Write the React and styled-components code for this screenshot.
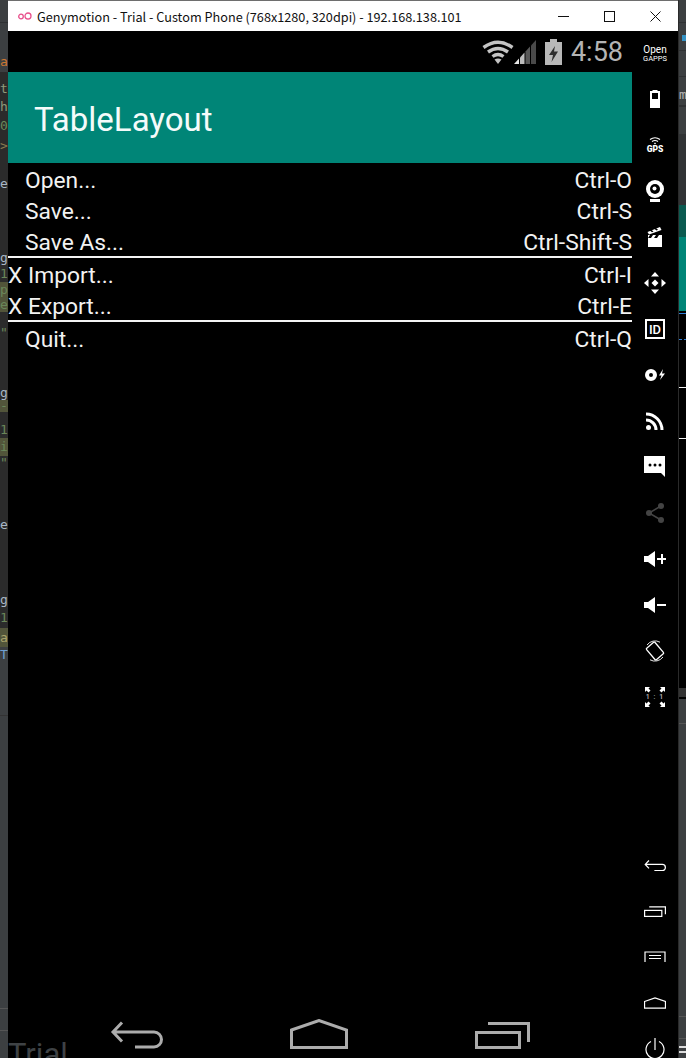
import React from 'react';
import styled, { createGlobalStyle } from 'styled-components';

const Global = createGlobalStyle`
  html, body { margin: 0; padding: 0; background: #000; }
  body { font-family: Roboto, "Liberation Sans", sans-serif; overflow: hidden; }
`;

const Desktop = styled.div`
  display: flex;
  width: 686px;
  height: 1058px;
  overflow: hidden;
  background: #3c3f41;
`;

const Gutter = styled.div`
  flex: none;
  width: 8px;
  display: flex;
  flex-direction: column;
  overflow: hidden;
  border-left: ${(p) => (p.$right ? '1px solid #2a2a2a' : 'none')};
  box-sizing: border-box;
`;

const Band = styled.div`
  flex: none;
  height: ${(p) => p.$h}px;
  line-height: ${(p) => p.$h}px;
  background: ${(p) => p.$bg || '#3c3f41'};
  color: ${(p) => p.$fg || '#a9b7c6'};
  font-family: "DejaVu Sans Mono", monospace;
  font-size: 13px;
  white-space: nowrap;
  overflow: hidden;
`;

const Window = styled.div`
  flex: none;
  width: 670px;
  display: flex;
  flex-direction: column;
  background: #000;
`;

const TitleBar = styled.div`
  flex: none;
  height: 30px;
  border-top: 1px solid #6e6e6e;
  background: #fff;
  display: flex;
  align-items: center;
  color: #111;
  font-family: "Noto Sans CJK SC", "Open Sans", sans-serif;
  font-size: 12.7px;
`;

const TitleLogo = styled.svg`
  flex: none;
  width: 14px;
  height: 10px;
  margin-left: 10px;
  margin-right: 5px;
`;

const TitleText = styled.span`
  flex: 1;
  white-space: nowrap;
`;

const WinButton = styled.div`
  flex: none;
  width: 46px;
  height: 30px;
  display: flex;
  align-items: center;
  justify-content: center;
  svg { width: 11px; height: 11px; }
`;

const Body = styled.div`
  flex: 1;
  display: flex;
  min-height: 0;
`;

const Phone = styled.div`
  position: relative;
  flex: none;
  width: 624px;
  display: flex;
  flex-direction: column;
  color: #fff;
`;

const StatusBar = styled.div`
  flex: none;
  height: 41px;
  display: flex;
  align-items: center;
  justify-content: flex-end;
  padding-right: 9px;
`;

const StatusTime = styled.span`
  margin-left: 9px;
  font-size: 27px;
  color: #b4b4b4;
`;

const StatusIcon = styled.svg`
  flex: none;
  display: block;
  margin-left: ${(p) => p.$gap || 0}px;
`;

const AppBar = styled.div`
  flex: none;
  height: 88px;
  padding-top: 3px;
  background: #008577;
  display: flex;
  align-items: center;
  padding-left: 26px;
  font-size: 33px;
  color: #f4fbfa;
`;

const Table = styled.div`
  flex: 1;
`;

const Row = styled.div`
  display: flex;
  justify-content: space-between;
  height: 31px;
  line-height: 35px;
  font-size: 22.8px;
  color: #f2f2f2;
`;

const RowLabel = styled.span`
  padding-left: ${(p) => (p.$marked ? 0 : 17)}px;
  white-space: pre;
`;

const Divider = styled.div`
  height: 2px;
  background: #f4f4f4;
`;

const Nav = styled.div`
  flex: none;
  display: flex;
  justify-content: center;
  gap: 127px;
  padding-bottom: 9px;
  color: #acacac;
`;

const Watermark = styled.span`
  position: absolute;
  left: 0;
  top: 1005px;
  font-size: 31px;
  color: #3e4245;
`;

const Rail = styled.div`
  flex: none;
  width: 46px;
  display: flex;
  flex-direction: column;
  overflow: hidden;
`;

const RailItem = styled.div`
  flex: none;
  height: 46px;
  display: flex;
  flex-direction: column;
  align-items: center;
  justify-content: center;
  color: ${(p) => (p.$off ? '#444' : '#fff')};
  &:first-child { height: 45px; }
`;

const RailGap = styled.div`
  flex: none;
  height: 122px;
`;

const GappsOpen = styled.span`
  font-size: 10px;
  line-height: 10px;
`;

const GappsSub = styled.span`
  font-size: 7.5px;
  line-height: 8px;
`;

const GpsLabel = styled.span`
  font-size: 8.5px;
  line-height: 9px;
  font-weight: 900;
`;

const IdBox = styled.div`
  width: 20px;
  height: 20px;
  box-sizing: border-box;
  border: 2px solid #fff;
  display: flex;
  align-items: center;
  justify-content: center;
  font-size: 13px;
  font-weight: 500;
`;

const RatioBox = styled.div`
  position: relative;
  width: 22px;
  height: 22px;
  display: flex;
  align-items: center;
  justify-content: center;
  font-size: 7px;
  font-weight: 500;
  letter-spacing: 1px;
  color: #bbb;
  svg { position: absolute; inset: 0; }
`;

const L = (h, bg, t, fg) => ({ h, bg, t, fg });
const DARK = '#2b2b2b';
const OLIVE = '#52553a';
const GREEN = '#6a8759';

const leftBands = [
  L(22), L(1, '#2f3133'), L(29), L(20, '#3c3f41', 'av', '#cc7832'),
  L(8, DARK), L(17, DARK, 't', '#8f9a7a'), L(19, DARK, 'h', '#8f9a7a'), L(20, DARK, '0', GREEN),
  L(19, DARK, '>', '#8a7a4e'), L(21, DARK), L(16, DARK, 'e'), L(58, DARK),
  L(16, DARK, 'g'), L(16, DARK, '1', GREEN), L(16, OLIVE, 'p', GREEN), L(14, OLIVE, 'e', GREEN),
  L(13, DARK), L(15, DARK, '"', GREEN), L(45, DARK), L(15, DARK, 'g'),
  L(12, OLIVE, '-', GREEN), L(10, DARK), L(16, DARK, '1', GREEN), L(18, OLIVE, 'i', GREEN),
  L(14, DARK, '"', GREEN), L(47, DARK), L(16, DARK, 'e'), L(59, DARK),
  L(16, DARK, 'g'), L(20, DARK, '1', GREEN), L(19, OLIVE, 'a', '#a9a36a'), L(15, '#3c3f41', 'T', '#6f9fd0'),
  L(53), L(1, '#333'), L(292), L(1, '#555'), L(21), L(1, '#555'), L(21),
];

const rightBands = [
  L(22), L(1, '#2f3133'), L(12), L(6, 'linear-gradient(90deg,#3c3f41 50%,#3592c4 50%)'), L(9),
  L(1, '#2f3133'), L(25), L(1, '#2f3133'), L(8), L(20, '#3c3f41', 'm', '#b5b5b5'), L(2, '#2f3133'),
  L(27), L(71, '#313335'), L(32, '#0b5a50'), L(74, '#008577'), L(2, '#000'), L(1, '#2f7fd6'),
  L(25, '#000'), L(1, 'repeating-linear-gradient(90deg,#2f7fd6 0 3px,#000 3px 5px)'), L(47, '#000'),
  L(1, '#f4f4f4'), L(50, '#000'), L(1, '#f4f4f4'), L(249, '#000'), L(9, '#333'), L(2, '#000'),
  L(24), L(1, '#555'), L(292), L(1, '#555'), L(21), L(1, '#555'), L(7), L(2, '#ddd'), L(3), L(2, '#ddd'), L(7),
];

const rows = [
  { label: 'Open...', key: 'Ctrl-O' },
  { label: 'Save...', key: 'Ctrl-S' },
  { label: 'Save As...', key: 'Ctrl-Shift-S' },
  { divider: true },
  { marked: true, label: 'X Import...', key: 'Ctrl-I' },
  { marked: true, label: 'X Export...', key: 'Ctrl-E' },
  { divider: true },
  { label: 'Quit...', key: 'Ctrl-Q' },
];

const BackIcon = ({ w = 53, h = 30, sw = 3 }) => (
  <svg width={w} height={h} viewBox="0 0 53 30" fill="none" stroke="currentColor" strokeWidth={sw}>
    <path d="M12 3.5 L3 13 L12 22.5 M3 13 H44 A7.5 7.5 0 0 1 44 28 H25" />
  </svg>
);

const HomeIcon = ({ w = 58, h = 30, sw = 3 }) => (
  <svg width={w} height={h} viewBox="0 0 58 30" fill="none" stroke="currentColor" strokeWidth={sw}>
    <path d="M1.5 11 L29 1.5 L56.5 11 V28.5 H1.5 Z" />
  </svg>
);

const RecentsIcon = ({ w = 55, h = 30, sw = 3 }) => (
  <svg width={w} height={h} viewBox="0 0 55 30" fill="none" stroke="currentColor" strokeWidth={sw}>
    <rect x="1.5" y="13.5" width="43" height="15" />
    <path d="M13 4.5 H53.5 V23" />
  </svg>
);

const Wifi = () => (
  <StatusIcon width="32" height="24" viewBox="0 0 32 24" fill="none" stroke="#c4c4c4" strokeWidth="3.4">
    <path d="M1.5 7.5 Q16 -3 30.5 7.5" />
    <path d="M6 12 Q16 5 26 12" />
    <path d="M10.5 16.5 Q16 12.5 21.5 16.5" />
    <path d="M12.5 19.5 Q16 17.5 19.5 19.5 L16 24 Z" fill="#c4c4c4" stroke="none" />
  </StatusIcon>
);

const Signal = () => (
  <StatusIcon width="22" height="24" viewBox="0 0 22 24">
    <polygon points="0,24 5,18.5 5,24" fill="#e6e6e6" />
    <polygon points="6,24 6,17.5 10.5,12.5 10.5,24" fill="#bdbdbd" />
    <polygon points="11.5,24 11.5,11.5 16,6.5 16,24" fill="#585858" />
    <polygon points="17,24 17,5.5 22,0 22,24" fill="#4a4a4a" />
  </StatusIcon>
);

const Battery = () => (
  <StatusIcon $gap={9} width="17" height="26" viewBox="0 0 17 26">
    <path d="M5 0 H12 V3 H17 V26 H0 V3 H5 Z" fill="#b8b8b8" />
    <path d="M10 7 L4 16 H8 L6.5 23 L13 12.5 H9 Z" fill="#2e2e2e" />
  </StatusIcon>
);

const Webcam = () => (
  <svg width="20" height="24" viewBox="0 0 20 24">
    <path d="M5 20 H15 V23 H5 Z" fill="currentColor" />
    <circle cx="10" cy="10" r="9" fill="currentColor" />
    <circle cx="10" cy="10" r="5" fill="#000" />
    <circle cx="9.5" cy="9.5" r="2" fill="currentColor" />
  </svg>
);

const Clapper = () => (
  <svg width="16" height="20" viewBox="0 0 16 20" fill="currentColor">
    <path d="M1 8 H15 V20 H1 Z" />
    <path d="M0.5 5 L13 0 L14.5 3 L2 7.5 Z" />
    <path d="M3 8 H6 L4 11 H1 Z M9 8 H12 L10 11 H7 Z" fill="#000" />
    <path d="M4 2.5 L6.5 4.5 L5 5.2 L2.5 3.2 Z M8.5 0.8 L11 2.8 L9.5 3.4 L7 1.4 Z" fill="#000" />
  </svg>
);

const Move = () => (
  <svg width="22" height="22" viewBox="0 0 22 22" fill="currentColor">
    <path d="M11 0 L15 4.5 H7 Z M11 22 L15 17.5 H7 Z M0 11 L4.5 7 V15 Z M22 11 L17.5 7 V15 Z" />
    <path d="M11 7.5 L14.5 11 L11 14.5 L7.5 11 Z" />
  </svg>
);

const Disc = () => (
  <svg width="22" height="14" viewBox="0 0 22 14" fill="currentColor">
    <path fillRule="evenodd" d="M7 1 A6 6 0 1 1 7 13 A6 6 0 1 1 7 1 Z M7 5 A2 2 0 1 0 7 9 A2 2 0 1 0 7 5 Z" />
    <path d="M19 1 L15 7.5 H17.5 L16 12 L21 5.5 H18 Z" />
  </svg>
);

const Rss = () => (
  <svg width="18" height="18" viewBox="0 0 18 18" fill="none" stroke="currentColor" strokeWidth="3">
    <circle cx="2.5" cy="15.5" r="2.5" fill="currentColor" stroke="none" />
    <path d="M0 8 A10 10 0 0 1 10 18" />
    <path d="M0 2 A16 16 0 0 1 16 18" />
  </svg>
);

const Message = () => (
  <svg width="22" height="24" viewBox="0 0 22 24">
    <path d="M0 1 H21 V22 L17 18 H0 Z" fill="currentColor" />
    <circle cx="6" cy="10" r="1.5" fill="#000" />
    <circle cx="11" cy="10" r="1.5" fill="#000" />
    <circle cx="16" cy="10" r="1.5" fill="#000" />
  </svg>
);

const Share = () => (
  <svg width="20" height="22" viewBox="0 0 20 22" fill="currentColor" stroke="currentColor">
    <path d="M16 4 L4 11 L16 18" fill="none" strokeWidth="1.5" />
    <circle cx="16" cy="4" r="3" stroke="none" />
    <circle cx="4" cy="11" r="3" stroke="none" />
    <circle cx="16" cy="18" r="3" stroke="none" />
  </svg>
);

const Volume = ({ plus }) => (
  <svg width="22" height="16" viewBox="0 0 22 16" fill="currentColor">
    <path d="M0 5 H4 L11 0 V16 L4 11 H0 Z" />
    <path d={plus ? 'M13 7 H17 V3 H19 V7 H22 V9 H19 V13 H17 V9 H13 Z' : 'M13 7 H22 V9 H13 Z'} />
  </svg>
);

const Rotate = () => (
  <svg width="22" height="22" viewBox="0 0 22 22" fill="none" stroke="currentColor">
    <rect x="5.5" y="3.5" width="11" height="15" rx="1" transform="rotate(-40 11 11)" strokeWidth="1.3" />
    <path d="M3 5 A10 10 0 0 1 16 2.2 M19 17 A10 10 0 0 1 6 19.8" strokeWidth="0.9" />
  </svg>
);

const RatioArrows = () => (
  <svg width="22" height="22" viewBox="0 0 22 22" fill="#fff">
    <path d="M1 1 H6 L4.5 2.5 L6.5 4.5 L4.5 6.5 L2.5 4.5 L1 6 Z" />
    <path d="M21 1 H16 L17.5 2.5 L15.5 4.5 L17.5 6.5 L19.5 4.5 L21 6 Z" />
    <path d="M1 21 H6 L4.5 19.5 L6.5 17.5 L4.5 15.5 L2.5 17.5 L1 16 Z" />
    <path d="M21 21 H16 L17.5 19.5 L15.5 17.5 L17.5 15.5 L19.5 17.5 L21 16 Z" />
  </svg>
);

const MenuIcon = () => (
  <svg width="22" height="12" viewBox="0 0 22 12" fill="none" stroke="currentColor" strokeWidth="1.2">
    <path d="M1 11 V1 H21 V11 M5 4.5 H17 M5 7.5 H17" />
  </svg>
);

const PowerIcon = () => (
  <svg width="20" height="24" viewBox="0 0 20 24" fill="none" stroke="currentColor" strokeWidth="1.2">
    <path d="M6 4.5 A9 9 0 1 0 14 4.5 M10 1 V13" />
  </svg>
);

const BatteryRail = () => (
  <svg width="10" height="18" viewBox="0 0 10 18">
    <path d="M2.5 0 H7.5 V1 H10 V18 H0 V1 H2.5 Z" fill="currentColor" />
    <rect x="2" y="3" width="6" height="6" fill="#000" />
  </svg>
);

const GpsWaves = () => (
  <svg width="12" height="8" viewBox="0 0 12 8" fill="none" stroke="currentColor" strokeWidth="1.1">
    <path d="M1 2.5 Q6 -1 11 2.5 M3 4.5 Q6 2.5 9 4.5" />
    <path d="M4.8 6 Q6 5.3 7.2 6 L6 7.5 Z" fill="currentColor" stroke="none" />
  </svg>
);

const App = () => (
  <Desktop>
    <Global />
    <Gutter>
      {leftBands.map((b, i) => (
        <Band key={i} $h={b.h} $bg={b.bg} $fg={b.fg}>{b.t}</Band>
      ))}
    </Gutter>
    <Window>
      <TitleBar>
        <TitleLogo viewBox="0 0 14 10" fill="none" stroke="#e8508c" strokeWidth="1.3">
          <circle cx="3" cy="5.5" r="2.3" />
          <circle cx="10" cy="5" r="3" />
        </TitleLogo>
        <TitleText>Genymotion - Trial - Custom Phone (768x1280, 320dpi) - 192.168.138.101</TitleText>
        <WinButton>
          <svg viewBox="0 0 11 11" stroke="#111" strokeWidth="1"><path d="M0 5.5 H11" /></svg>
        </WinButton>
        <WinButton>
          <svg viewBox="0 0 11 11" fill="none" stroke="#111" strokeWidth="1"><rect x="0.5" y="0.5" width="10" height="10" /></svg>
        </WinButton>
        <WinButton>
          <svg viewBox="0 0 11 11" stroke="#111" strokeWidth="1"><path d="M0.5 0.5 L10.5 10.5 M10.5 0.5 L0.5 10.5" /></svg>
        </WinButton>
      </TitleBar>
      <Body>
        <Phone>
          <StatusBar>
            <Wifi />
            <Signal />
            <Battery />
            <StatusTime>4:58</StatusTime>
          </StatusBar>
          <AppBar>TableLayout</AppBar>
          <Table>
            {rows.map((r, i) =>
              r.divider ? (
                <Divider key={i} />
              ) : (
                <Row key={i}>
                  <RowLabel $marked={r.marked}>{r.label}</RowLabel>
                  <span>{r.key}</span>
                </Row>
              )
            )}
          </Table>
          <Nav>
            <BackIcon />
            <HomeIcon />
            <RecentsIcon />
          </Nav>
          <Watermark>Trial</Watermark>
        </Phone>
        <Rail>
          <RailItem>
            <GappsOpen>Open</GappsOpen>
            <GappsSub>GAPPS</GappsSub>
          </RailItem>
          <RailItem><BatteryRail /></RailItem>
          <RailItem>
            <GpsWaves />
            <GpsLabel>GPS</GpsLabel>
          </RailItem>
          <RailItem><Webcam /></RailItem>
          <RailItem><Clapper /></RailItem>
          <RailItem><Move /></RailItem>
          <RailItem><IdBox>ID</IdBox></RailItem>
          <RailItem><Disc /></RailItem>
          <RailItem><Rss /></RailItem>
          <RailItem><Message /></RailItem>
          <RailItem $off><Share /></RailItem>
          <RailItem><Volume plus /></RailItem>
          <RailItem><Volume /></RailItem>
          <RailItem><Rotate /></RailItem>
          <RailItem>
            <RatioBox>1 : 1<RatioArrows /></RatioBox>
          </RailItem>
          <RailGap />
          <RailItem><BackIcon w={22} h={12.5} sw={3} /></RailItem>
          <RailItem><RecentsIcon w={22} h={12} sw={3} /></RailItem>
          <RailItem><MenuIcon /></RailItem>
          <RailItem><HomeIcon w={22} h={12} sw={3} /></RailItem>
          <RailItem><PowerIcon /></RailItem>
        </Rail>
      </Body>
    </Window>
    <Gutter $right>
      {rightBands.map((b, i) => (
        <Band key={i} $h={b.h} $bg={b.bg} $fg={b.fg}>{b.t}</Band>
      ))}
    </Gutter>
  </Desktop>
);

export default App;
